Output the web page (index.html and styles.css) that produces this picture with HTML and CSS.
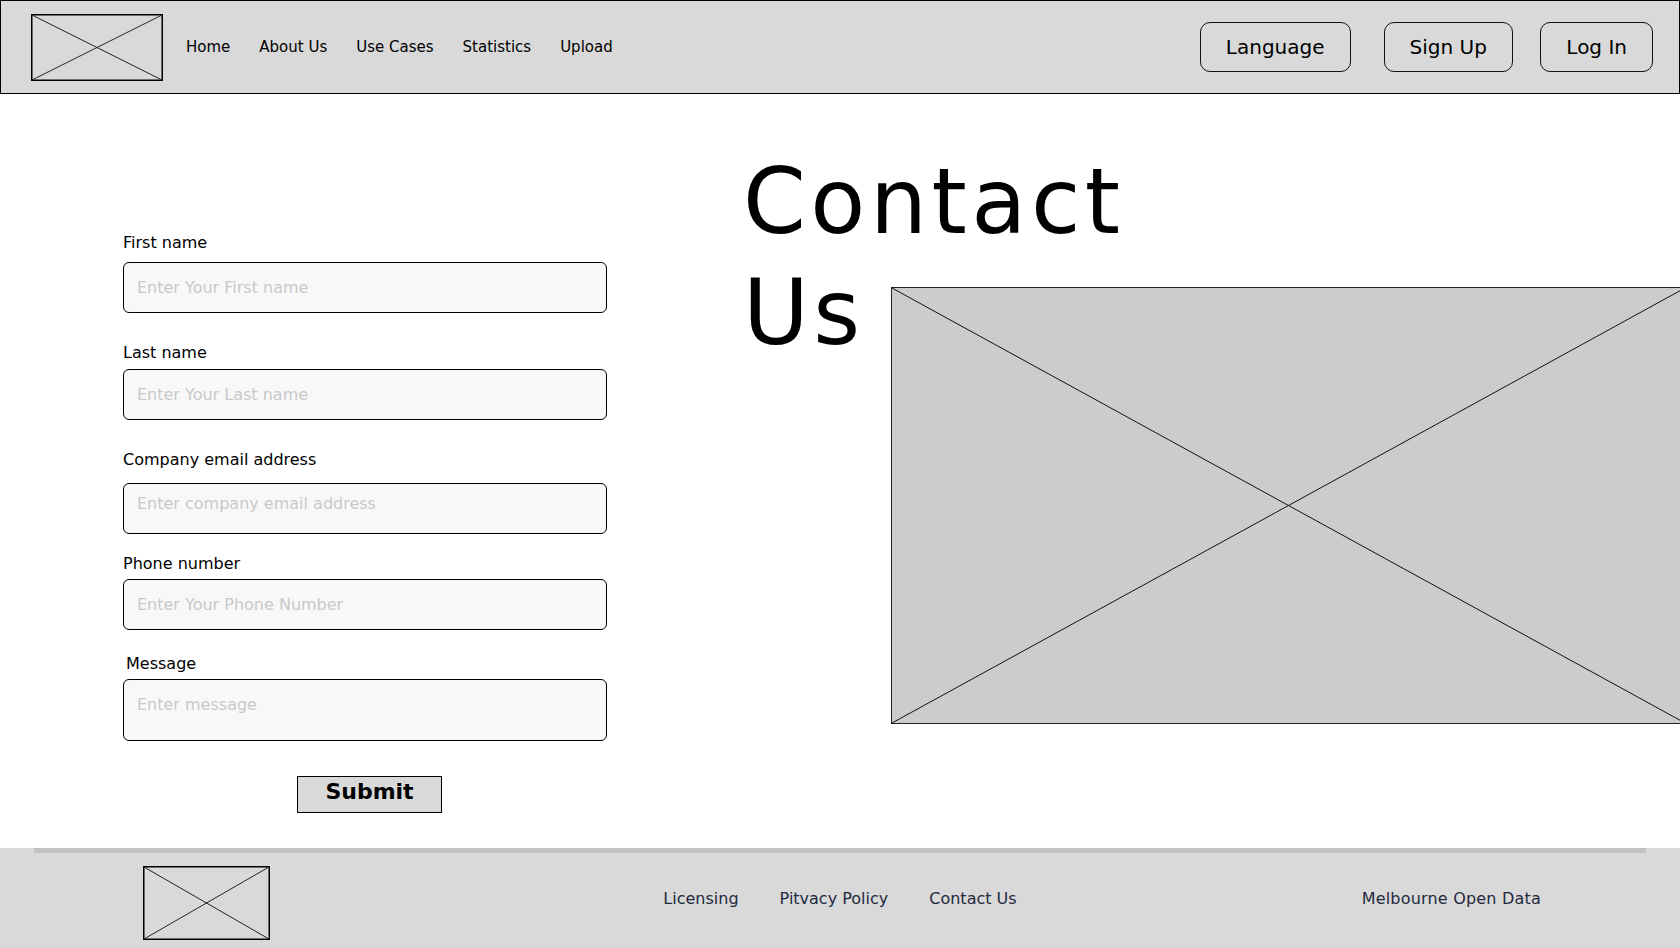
FILE: index.html
```html
<!DOCTYPE html>
<html lang="en">
<head>
<meta charset="utf-8">
<title>Contact Us</title>
<link rel="stylesheet" href="styles.css">
</head>
<body>
<header class="topbar">
  <a class="brand-logo" href="#" aria-label="Logo">
    <svg class="placeholder-svg" viewBox="0 0 132 67" preserveAspectRatio="none">
      <rect x="0.75" y="0.75" width="130.5" height="65.5" fill="none" stroke="#000" stroke-width="1.5"/>
      <line x1="1" y1="1" x2="131" y2="66" stroke="#222" stroke-width="1"/>
      <line x1="1" y1="66" x2="131" y2="1" stroke="#222" stroke-width="1"/>
    </svg>
  </a>
  <nav class="nav">
    <a href="#">Home</a>
    <a href="#">About Us</a>
    <a href="#">Use Cases</a>
    <a href="#">Statistics</a>
    <a href="#">Upload</a>
  </nav>
  <div class="actions">
    <button class="pill pill-lang" type="button">Language</button>
    <button class="pill pill-signup" type="button">Sign Up</button>
    <button class="pill" type="button">Log In</button>
  </div>
</header>

<main class="page">
  <form class="contact-form">
    <div class="field field-first">
      <label for="first">First name</label>
      <input class="field-input" id="first" type="text" placeholder="Enter Your First name">
    </div>
    <div class="field field-last">
      <label for="last">Last name</label>
      <input class="field-input" id="last" type="text" placeholder="Enter Your Last name">
    </div>
    <div class="field field-email">
      <label for="email">Company email address</label>
      <input class="field-input" id="email" type="email" placeholder="Enter company email address">
    </div>
    <div class="field field-phone">
      <label for="phone">Phone number</label>
      <input class="field-input" id="phone" type="tel" placeholder="Enter Your Phone Number">
    </div>
    <div class="field field-message">
      <label for="message">Message</label>
      <textarea class="field-input field-textarea" id="message" placeholder="Enter message"></textarea>
    </div>
    <div class="submit-row">
      <button class="submit" type="button">Submit</button>
    </div>
  </form>

  <section class="hero">
    <h1 class="hero-title">Contact Us</h1>
    <div class="hero-image">
      <svg class="placeholder-svg" viewBox="0 0 795 437" preserveAspectRatio="none">
        <line x1="0" y1="0" x2="795" y2="437" stroke="#111" stroke-width="1" vector-effect="non-scaling-stroke"/>
        <line x1="0" y1="437" x2="795" y2="0" stroke="#111" stroke-width="1" vector-effect="non-scaling-stroke"/>
      </svg>
    </div>
  </section>
</main>

<footer class="site-footer">
  <div class="footer-rule"></div>
  <div class="footer-inner">
    <a class="footer-logo" href="#" aria-label="Logo">
      <svg class="placeholder-svg" viewBox="0 0 127 74" preserveAspectRatio="none">
        <rect x="0.75" y="0.75" width="125.5" height="72.5" fill="none" stroke="#000" stroke-width="1.5"/>
        <line x1="1" y1="1" x2="126" y2="73" stroke="#222" stroke-width="1"/>
        <line x1="1" y1="73" x2="126" y2="1" stroke="#222" stroke-width="1"/>
      </svg>
    </a>
    <nav class="footer-links">
      <a href="#">Licensing</a>
      <a href="#">Pitvacy Policy</a>
      <a href="#">Contact Us</a>
    </nav>
    <div class="footer-brand">Melbourne Open Data</div>
  </div>
</footer>
</body>
</html>
```

FILE: styles.css
```css
html, body {
  margin: 0;
  padding: 0;
}

body {
  font-family: "DejaVu Sans", "Liberation Sans", sans-serif;
  color: #000;
  background: #fff;
  overflow-x: hidden;
}

.placeholder-svg {
  display: block;
  width: 100%;
  height: 100%;
}

/* Header */
.topbar {
  display: flex;
  align-items: center;
  height: 94px;
  box-sizing: border-box;
  border: 1px solid #000;
  background: #d9d9d9;
  padding: 0 26px 0 30px;
}

.brand-logo {
  display: block;
  flex: none;
  width: 132px;
  height: 67px;
}

.nav {
  display: flex;
  gap: 29px;
  margin-left: 23px;
  font-size: 15px;
  line-height: 18px;
}

.nav a {
  color: #000;
  text-decoration: none;
}

.actions {
  display: flex;
  margin-left: auto;
}

.pill {
  height: 50px;
  box-sizing: border-box;
  padding: 0 25px;
  border: 1px solid #111;
  border-radius: 10px;
  background: transparent;
  font-family: "DejaVu Sans", "Liberation Sans", sans-serif;
  font-size: 20px;
  color: #000;
  cursor: pointer;
}

.pill-lang {
  margin-right: 33px;
}

.pill-signup {
  margin-right: 27.5px;
}

/* Main */
.page {
  display: flex;
  align-items: flex-start;
  padding: 0 0 35px 123px;
  overflow: hidden;
}

.contact-form {
  flex: 0 0 483.5px;
  padding-top: 139px;
}

.field label {
  display: block;
  font-size: 16px;
  line-height: 19px;
  color: #000;
}

.field-input {
  display: block;
  width: 100%;
  height: 51px;
  box-sizing: border-box;
  margin: 0;
  border: 1px solid #000;
  border-radius: 6px;
  background: #f8f8f8;
  padding: 0 13px;
  font-family: "DejaVu Sans", "Liberation Sans", sans-serif;
  font-size: 16px;
  color: #000;
  outline: none;
}

.field-input::placeholder {
  color: #c9c9c9;
}

.field-first label { margin-bottom: 10px; }

.field-last { margin-top: 30px; }
.field-last label { margin-bottom: 7px; }

.field-email { margin-top: 30px; }
.field-email label { margin-bottom: 14px; }
.field-email .field-input { padding-bottom: 10px; }

.field-phone { margin-top: 20px; }
.field-phone label { margin-bottom: 6px; }

.field-message { margin-top: 24px; }
.field-message label { margin-bottom: 6px; padding-left: 3px; }

.field-textarea {
  height: 62px;
  padding: 15px 13px 0;
  resize: none;
  line-height: normal;
}

.submit-row {
  margin-top: 35px;
  padding-left: 174px;
}

.submit {
  display: block;
  width: 145px;
  height: 37px;
  box-sizing: border-box;
  padding: 0 0 6px;
  border: 1px solid #000;
  background: #d9d9d9;
  font-family: "DejaVu Sans", "Liberation Sans", sans-serif;
  font-size: 22px;
  font-weight: 700;
  line-height: 26px;
  color: #000;
  cursor: pointer;
}

/* Hero */
.hero {
  display: flex;
  align-items: flex-start;
  flex: none;
  margin-left: 136.5px;
  padding-top: 52px;
}

.hero-title {
  flex: none;
  width: 147.5px;
  margin: 0;
  font-size: 90px;
  line-height: 111px;
  font-weight: 400;
  letter-spacing: 4.5px;
  color: #000;
}

.hero-image {
  flex: none;
  width: 795px;
  height: 437px;
  margin-top: 141px;
  box-sizing: border-box;
  border: 1px solid #222;
  background: #cccccc;
}

/* Footer */
.site-footer {
  height: 100px;
  background: #d9d9d9;
}

.footer-rule {
  height: 5px;
  margin: 0 34px;
  background: #c3c3c7;
}

.footer-inner {
  display: grid;
  grid-template-columns: 1fr auto 1fr;
  align-items: start;
  padding: 13px 143px 0;
}

.footer-logo {
  display: block;
  width: 127px;
  height: 74px;
}

.footer-links {
  display: flex;
  gap: 41px;
  margin-top: 23px;
}

.footer-links a,
.footer-brand {
  font-size: 16px;
  line-height: 19px;
  color: #232a3e;
  text-decoration: none;
}

.footer-brand {
  justify-self: end;
  margin-top: 23px;
  margin-right: -4px;
  letter-spacing: 0.2px;
}
```
